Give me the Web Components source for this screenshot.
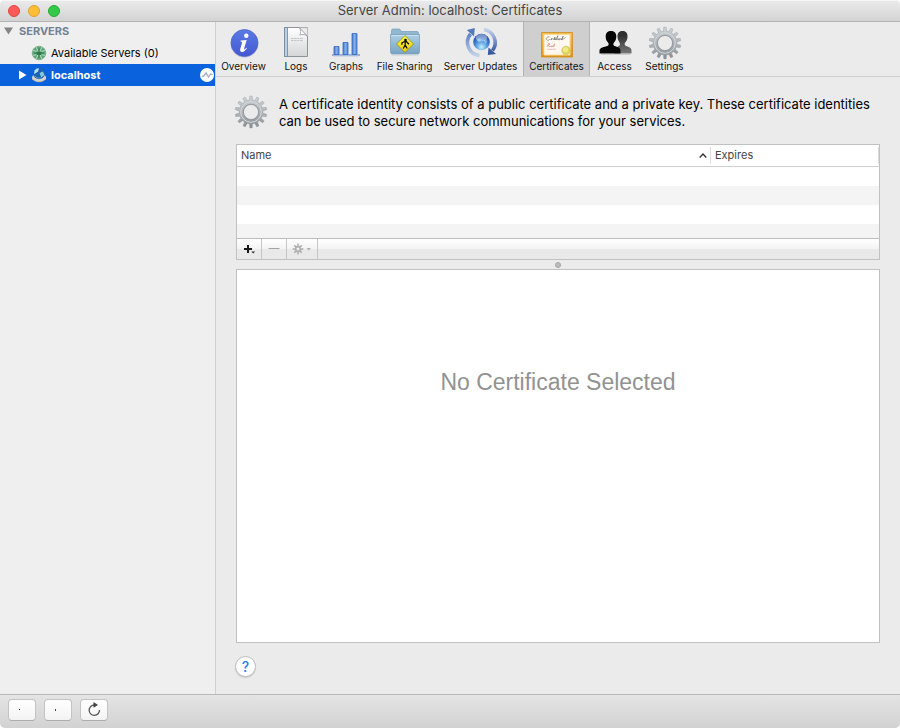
<!DOCTYPE html>
<html lang="en">
<head>
<meta charset="utf-8">
<title>Server Admin: localhost: Certificates</title>
<style>
  html, body { margin: 0; }
  body { background: #fff; font-family: Inter, "Liberation Sans", sans-serif; color: #000; }
</style>
</head>
<body>
<admin-window>
  <title-bar slot="title">Server Admin: localhost: Certificates</title-bar>
  <source-list slot="sidebar"></source-list>
  <tool-bar slot="main">
    <tool-item icon="info" style="--w:55px">Overview</tool-item>
    <tool-item icon="logs" style="--w:50px">Logs</tool-item>
    <tool-item icon="graphs" style="--w:50px">Graphs</tool-item>
    <tool-item icon="sharing" style="--w:67px">File Sharing</tool-item>
    <tool-item icon="updates" style="--w:85px">Server Updates</tool-item>
    <tool-item icon="certificate" style="--w:67px" selected>Certificates</tool-item>
    <tool-item icon="access" style="--w:49px">Access</tool-item>
    <tool-item icon="gear" style="--w:51px">Settings</tool-item>
  </tool-bar>
  <certificate-pane slot="main">
    <span slot="intro">A certificate identity consists of a public certificate and a private key. These certificate identities can be used to secure network communications for your services.</span>
    <certificate-table slot="list"></certificate-table>
    <span slot="detail">No Certificate Selected</span>
  </certificate-pane>
  <bottom-bar slot="footer"></bottom-bar>
</admin-window>

<script>
function gearPath(cx, cy, inner, outer, teeth) {
  const pts = [];
  const step = Math.PI * 2 / teeth;
  const at = (r, a) => pts.push((cx + r * Math.sin(a)).toFixed(2) + ' ' + (cy - r * Math.cos(a)).toFixed(2));
  for (let i = 0; i < teeth; i++) {
    const a = i * step;
    at(inner, a - step * .3);
    at(outer, a - step * .17);
    at(outer, a + step * .17);
    at(inner, a + step * .3);
  }
  return 'M' + pts.join('L') + 'Z';
}

const ICONS = {
  info: `<defs><linearGradient id="a" x2="0" y2="1"><stop stop-color="#5a7be4"/><stop offset="1" stop-color="#4458d2"/></linearGradient></defs>
    <circle cx="16.500" cy="16.500" r="14" fill="#bfc4d8"/><circle cx="16.500" cy="16" r="13.500" fill="url(#a)" stroke="#4a5fc4" stroke-width=".6"/>
    <circle cx="18.300" cy="8.800" r="2.200" fill="#fff"/>
    <path d="M12.700 13.600l6-.7-2.600 8.600c-.4 1.400.5 1.300 2.200-.7l.6.5c-1.700 2.600-3.200 3.700-4.900 3.600-1.800-.1-2.200-1.500-1.700-3.200l1.700-5.700c.3-1.100-.1-1.500-1.500-1.600z" fill="#fff"/>`,
  logs: `<defs><linearGradient id="a" x2="0" y2="1"><stop stop-color="#fff"/><stop offset="1" stop-color="#d3d6d7"/></linearGradient></defs>
    <path d="M4.500.500h23v29h-23z" fill="url(#a)" stroke="#8f9497"/>
    <path d="M4.500.500h3v29h-3z" fill="#b9cfe8" stroke="#71869b" stroke-width=".8"/>
    <path d="M19.500.800l8 8.200V.8z" fill="#ececec" stroke="#b9b9b9" stroke-width=".6"/>
    <path d="M19.500.800c1.500 2.500 1.500 5 .3 7.200 3-1.200 5.700-.7 7.700 1.500z" fill="#fff" stroke="#9c9fa1" stroke-width=".8"/>
    <path d="M11 11.500h12M11 13.500h12" stroke="#b9bcbe" stroke-width=".8" stroke-dasharray="2 .6 3 .6"/>`,
  graphs: `<defs><linearGradient id="a"><stop stop-color="#4478cf"/><stop offset=".5" stop-color="#80aeee"/><stop offset="1" stop-color="#4f84da"/></linearGradient></defs>
    <g transform="translate(-.5 0)"><g fill="url(#a)" stroke="#3968b8" stroke-width=".8"><path d="M4.500 19.500h5v8h-5z"/><path d="M13.500 15.500h5v12h-5z"/><path d="M22.500 6.500h5v21h-5z"/></g>
    <path d="M2.500 28h28" stroke="#3f70c4"/><path d="M4 29.200h25" stroke="#c9d4e8"/></g>`,
  sharing: `<defs><linearGradient id="a" x2="0" y2="1"><stop stop-color="#acd0e4"/><stop offset="1" stop-color="#78a3c2"/></linearGradient><linearGradient id="b" x2="0" y2="1"><stop stop-color="#fff64a"/><stop offset="1" stop-color="#e6ce07"/></linearGradient></defs>
    <g transform="translate(-.5 0)"><path d="M3 6V3.500Q3 2 4.500 2h6q1 0 1.500 1l.5 1.500h16Q30 4.500 30 6v5H3z" fill="#91b8d0" stroke="#759db9" stroke-width=".7"/>
    <path d="M2 7.500h29v17.500q0 2-2 2H4q-2 0-2-2z" fill="url(#a)" stroke="#739bb6" stroke-width=".7"/><path d="M3 8.500h27" stroke="#cae2ef"/><path d="M3 28h27" stroke="#c7d0d6"/>
    <path d="M16.500 8.500l8.500 8.500-8.500 8.500L8 17z" fill="url(#b)" stroke="#958719" stroke-width=".8"/>
    <circle cx="17" cy="13" r="1.300"/><path d="M16 14.500l2 .2 2.500 2.500M16 14.500l-2.500 1.300-.2 2M16.700 14.500v3.500l2 3.500M16.700 18l-2 3.500" fill="none" stroke="#111" stroke-width="1.300"/></g>`,
  updates: `<defs><radialGradient id="a" cx=".5" cy=".8" r=".7"><stop stop-color="#c6f1fd"/><stop offset=".5" stop-color="#4f97e0"/><stop offset="1" stop-color="#1d4aa6"/></radialGradient><linearGradient id="b" x2="0" y2="1"><stop stop-color="#5f82c4"/><stop offset="1" stop-color="#c3d1e8"/></linearGradient><linearGradient id="c" x2="0" y2="1"><stop stop-color="#c3d1e8"/><stop offset="1" stop-color="#3c5da6"/></linearGradient></defs>
    <path d="M14.500 28.500A13.200 13.200 0 0 1 5.500 7" fill="none" stroke="url(#b)" stroke-width="3.600"/><path d="M1.800 3l8-2-.8 8.500z" fill="#5677b8"/>
    <path d="M19 2.500A13.200 13.200 0 0 1 27.500 23.500" fill="none" stroke="url(#c)" stroke-width="3.600"/><path d="M23.500 20.500l-.7 7.500 8.200-1z" fill="#3b599e"/>
    <circle cx="16.500" cy="15" r="8.300" fill="url(#a)"/><ellipse cx="16.500" cy="10.800" rx="5.800" ry="3.800" fill="#fff" opacity=".4"/><path d="M11.500 13l3-2 2 1.500-2.500 3zM18.500 13l4 .5-2 4z" fill="#bde6f7" opacity=".5"/>`,
  certificate: `<defs><linearGradient id="a" x2="0" y2="1"><stop stop-color="#f6bf50"/><stop offset="1" stop-color="#dc9418"/></linearGradient></defs>
    <g transform="translate(-1 0)"><path d="M1.500 5.500h31v24.500h-31z" fill="url(#a)" stroke="#cb8d22" stroke-width=".8"/><path d="M4 7.500h26v20.500h-26z" fill="#fff8ee" stroke="#fbdc96"/>
    <path d="M9.500 10c-2-1-3.700 1-3 2.500s2.500.8 3.500-.5M10.500 12.500l1.500-1.200-.7 1.700 1.700-1.700M13.500 13l1.500-3-1 3 1.500-1.500v1.500l2.500-4.500-1.500 4.500 1.500-1.500v1.500l1.700-1.500-.5 1.500 2-1.500v1.500l2-4-1 4 1.800-1.500 1.700-1" fill="none" stroke="#6c6b6b" stroke-width=".6"/>
    <path d="M7 20l1.500-3.500 1.500.6-2 1.200 2 1.500 1.500-1v1l1.500-1v1l1.500-3-.5 3" fill="none" stroke="#e07878" stroke-width=".6"/><path d="M7 22.300h9" stroke="#ecb3b3" stroke-width=".8"/>
    <circle cx="26" cy="23.500" r="4.300" fill="#dfd458" stroke="#cbbd49" stroke-width=".7" stroke-dasharray="1.500 .5"/><circle cx="25.500" cy="22.700" r="2.600" fill="#eee887"/></g>`,
  access: `<defs><linearGradient id="a" x2="0" y2="1"><stop offset=".2" stop-color="#303030"/><stop offset="1" stop-color="#777"/></linearGradient></defs>
    <path d="M15 26.500h17.500v-3c0-3-3-3.500-5.500-4.500-1.500-.7-1.800-2-.8-3.500 1.500-1.500 2.300-3.300 2.300-6 0-4-2-5.500-5-5.500s-5 1.500-5 5.500c0 3 1 4.500 2 6 1 1.700.5 3-1 3.500z" fill="url(#a)"/>
    <path d="M.5 26.500h21v-3c0-3-3-3.500-6-4.500-1.500-.7-1.500-2-.5-3.500 1.500-1.500 2.300-3.500 2.300-6C17.300 5.500 15 4 12 4S6.700 5.500 6.700 9.500c0 3 .8 4.500 2.300 6 1 1.500 1 2.800-.5 3.500-3 1-8 1.500-8 4.500z" fill="#050505"/><path d="M2 27.500h29" stroke="#bbb" opacity=".6"/>`,
  gear: `<defs><linearGradient id="a" x2="0" y2="1"><stop stop-color="#cdd1d5"/><stop offset=".6" stop-color="#a9afb4"/><stop offset="1" stop-color="#868c91"/></linearGradient></defs>
    <path fill-rule="evenodd" d="${gearPath(16, 16, 12, 16, 14)}M8.500 16a7.500 7.500 0 1 0 15 0a7.500 7.500 0 1 0-15 0z" fill="url(#a)" stroke="#9a9fa3" stroke-width=".4"/>
    <circle cx="16" cy="16" r="10.300" fill="none" stroke="#d3d7da" stroke-width="1"/><circle cx="16" cy="16" r="7.700" fill="none" stroke="#8c9297" stroke-width=".8"/>`
};
const icon = name => `<svg class="icon" width="32" height="32" viewBox="0 0 32 32" overflow="visible" aria-hidden="true">${ICONS[name]}</svg>`;

const define = (name, markup, setup) => customElements.define(name, class extends HTMLElement {
  constructor() {
    super();
    const t = document.createElement('template');
    t.innerHTML = typeof markup === 'function' ? markup(this) : markup;
    this.attachShadow({ mode: 'open' }).append(t.content.cloneNode(true));
    if (setup) setup(this);
  }
});

define('admin-window', `<style>
  :host { display: flex; flex-direction: column; min-height: 100vh; background: #ebebeb; border-radius: 5px; overflow: hidden; }
  .body { flex: 1; display: flex; }
  .side { flex: none; width: 215px; background: #efefef; border-right: 1px solid #cfcfcf; }
  main { flex: 1; min-width: 0; display: flex; flex-direction: column; }
</style>
<slot name="title"></slot>
<div class="body"><nav class="side" aria-label="Servers"><slot name="sidebar"></slot></nav><main><slot name="main"></slot></main></div>
<slot name="footer"></slot>`);

define('title-bar', `<style>
  :host { display: grid; grid-template-columns: 60px 1fr 60px; align-items: center; height: 21px; background: linear-gradient(#ebebeb, #d3d3d3); border-bottom: 1px solid #b3b3b3; box-shadow: inset 0 1px #f6f6f6; }
  .lights { display: flex; gap: 8px; padding-left: 8px; }
  button { box-sizing: border-box; width: 12px; height: 12px; padding: 0; border-radius: 50%; border: 1px solid; }
  .close { background: #fc5b57; border-color: #df4744; }
  .min { background: #fdbe33; border-color: #de9f34; }
  .zoom { background: #34c948; border-color: #27aa35; }
  h1 { margin: 0; font-size: 13px; line-height: 21px; font-weight: 400; color: #454545; text-align: center; white-space: nowrap; }
</style>
<div class="lights"><button class="close" aria-label="Close"></button><button class="min" aria-label="Minimize"></button><button class="zoom" aria-label="Zoom"></button></div>
<h1><slot></slot></h1>`);

define('source-list', `<style>
  :host { display: block; font-size: 11px; }
  ul { list-style: none; margin: 0; padding: 0; }
  button { display: flex; align-items: center; width: 100%; height: 22px; margin: 0; padding: 0; border: 0; background: none; font: inherit; color: inherit; text-align: left; }
  .head { height: 20px; padding: 0 0 2px 4px; gap: 5px; font-weight: 700; color: #718296; }
  .row { padding-left: 18px; gap: 4px; }
  .arrow { width: 9px; height: 10px; }
  .label { flex: 1; }
  .on { background: #0a63dc; color: #fff; font-weight: 700; }
</style>
<button class="head" aria-expanded="true"><svg width="10" height="8"><path d="M0 .500h9L4.500 7.500z" fill="#858585"/></svg>SERVERS</button>
<ul>
 <li><button class="row"><span class="arrow"></span>
  <svg width="16" height="16" viewBox="0 0 16 16"><circle cx="8" cy="8" r="6.800" fill="#5aa775"/><path d="M2 5.500q6 3 12 0M2 10.500q6-3 12 0M5 2q4 6 0 12M11 2q-4 6 0 12" stroke="#c3e3ce" fill="none" stroke-width=".9"/><path d="M5.500 6.500h5v3.500h-5z" fill="#2f8450"/><path d="M3 8h10M8 3v10" stroke="#287748" stroke-width=".8"/><circle cx="8" cy="8" r="6.800" fill="none" stroke="#7fa98c" stroke-width=".8"/></svg>
  <span class="label">Available Servers (0)</span></button></li>
 <li><button class="row on" aria-current="true"><svg class="arrow" viewBox="0 0 9 10"><path d="M1 0.500v9L8.500 5z" fill="#fff"/></svg>
  <svg width="16" height="16" viewBox="0 0 16 16"><path d="M1 10q7 3 14 0v2.500q-7 5.500-14 0z" fill="#b0b0a8"/><ellipse cx="8" cy="10.500" rx="7" ry="3.800" fill="#d6d5cd"/><circle cx="8" cy="6.500" r="5.800" fill="#1b63b2"/><path d="M3.500 3.500q2.500-3 4.500-2L7 4.500 5 6 3 7z" fill="#b4dded"/><path d="M8.500 6l3.500-1.500 1.300 3.500-3 2.500z" fill="#8fc6e2"/><path d="M3.500 9q3.500 3.500 7 2" stroke="#5f9ccd" fill="none"/></svg>
  <span class="label">localhost</span>
  <svg width="15" height="14" viewBox="0 0 15 14"><circle cx="7" cy="7" r="7" fill="#fff"/><path d="M2 8l1.500.5L6 5l2.500 4 2-3 2 .7" fill="none" stroke="#9eabc1" stroke-width="1.300"/></svg></button></li>
</ul>`);

define('tool-bar', `<style>
  :host { display: flex; height: 54px; border-bottom: 1px solid #d0d0d0; }
</style><slot></slot>`);

define('tool-item', el => `<style>
  :host { display: block; flex: none; width: var(--w); }
  :host([selected]) { background: #cfcfcf; box-shadow: inset 1px 0 #b4b4b4, inset -1px 0 #b4b4b4; }
  button { display: flex; flex-direction: column; align-items: center; gap: 1px; width: 100%; height: 100%; margin: 0; padding: 5px 0 0; border: 0; background: none; color: #111; font: 10px/13px Inter, sans-serif; white-space: nowrap; }
  .icon { flex: none; }
</style><button>${icon(el.getAttribute('icon'))}<slot></slot></button>`);

define('certificate-table', `<style>
  :host { display: block; border: 1px solid #c1c1c1; background: #fff; }
  .clip { height: 93px; overflow: hidden; }
  table { width: 100%; border-collapse: separate; border-spacing: 0; table-layout: fixed; }
  th { height: 21px; padding: 0 3px 0 4px; border-bottom: 1px solid #cfcfcf; font-size: 11px; line-height: 21px; font-weight: 400; text-align: left; color: #444; }
  th > div { display: flex; align-items: center; justify-content: space-between; }
  .expires { width: 161px; padding-left: 5px; background: linear-gradient(#dcdcdc, #dcdcdc) 0 2px / 1px 17px no-repeat, linear-gradient(#dcdcdc, #dcdcdc) 100% 2px / 1px 17px no-repeat; }
  td { height: 19px; padding: 0; }
  tbody tr:nth-child(even) { background: #f4f4f4; }
  .actions { display: flex; height: 20px; border-top: 1px solid #bdbdbd; background: linear-gradient(#fff, #f4f4f4 50%, #e9e9e9 50%); }
  button { box-sizing: border-box; width: 25px; height: 20px; margin: 0; padding: 0; border: 0; border-right: 1px solid #c6c6c6; background: none; display: grid; place-items: center; }
  .wide { width: 31px; }
</style>
<div class="clip"><table>
 <thead><tr><th aria-sort="ascending"><div>Name<svg width="8" height="6"><path d="M.7 4.500L4 1 7.300 4.500" fill="none" stroke="#333" stroke-width="1.300"/></svg></div></th><th class="expires">Expires</th></tr></thead>
 <tbody><tr><td></td><td></td></tr><tr><td></td><td></td></tr><tr><td></td><td></td></tr><tr><td></td><td></td></tr></tbody>
</table></div>
<div class="actions">
 <button aria-label="Add"><svg width="12" height="10"><path d="M1 5h8M5 1v8" stroke="#181818" stroke-width="2"/><path d="M8.500 7.500h3.500L10.200 9.500z" fill="#222"/></svg></button>
 <button aria-label="Remove" disabled><svg width="12" height="10"><path d="M.5 4.500h11" stroke="#a4a4a4"/></svg></button>
 <button class="wide" aria-label="Certificate actions" disabled><svg width="20" height="12"><path fill-rule="evenodd" d="${gearPath(6, 6, 3.400, 5.500, 8)}M4.500 6a1.500 1.500 0 1 0 3 0a1.500 1.500 0 1 0-3 0z" fill="#b0b0b0"/><path d="M14.500 5h4.500l-2.200 2.500z" fill="#b0b0b0"/></svg></button>
</div>`);

define('certificate-pane', `<style>
  :host { flex: 1; display: flex; flex-direction: column; padding: 19px 20px 17px; }
  .intro { display: flex; gap: 12px; margin-left: -1px; padding-bottom: 14px; font-size: 13px; line-height: 17px; }
  .intro p { margin: 0; min-height: 34px; }
  .icon { flex: none; }
  .split { display: grid; place-items: center; height: 9px; }
  .grip { box-sizing: border-box; width: 6px; height: 6px; border-radius: 50%; background: #bcbcbc; border: 1px solid #a6a6a6; }
  .detail { flex: 1; border: 1px solid #c1c1c1; background: #fff; text-align: center; }
  .detail p { margin: 98px 0 0; font: 23px/28px "Liberation Sans", Arial, sans-serif; color: #929292; }
  .help { box-sizing: border-box; width: 21px; height: 21px; margin: 13px 0 0 -1px; padding: 0; border: 1px solid #bdbdbd; border-radius: 50%; background: #fff; box-shadow: 0 1px 1px #0002; color: #1b83f5; font: 500 14px/19px Inter, sans-serif; }
</style>
<div class="intro">${icon('gear')}<p><slot name="intro"></slot></p></div>
<slot name="list"></slot>
<div class="split"><span class="grip"></span></div>
<section class="detail"><p><slot name="detail"></slot></p></section>
<button class="help" aria-label="Help">?</button>`);

define('bottom-bar', `<style>
  :host { display: flex; gap: 8px; padding: 4px 8px 7px; border-top: 1px solid #b9b9b9; background: linear-gradient(#e4e4e4, #d2d2d2); }
  button { box-sizing: border-box; width: 28px; height: 22px; margin: 0; padding: 0; display: grid; place-items: center; border: 1px solid #c3c3c3; border-bottom-color: #adadad; border-radius: 4px; background: linear-gradient(#fff, #f3f3f3); }
</style>
<button aria-label="Add"><svg width="10" height="10"><path d="M2 4.500h1" stroke="#222"/></svg></button>
<button aria-label="Actions"><svg width="10" height="10"><path d="M2.500 4v2" stroke="#444"/></svg></button>
<button aria-label="Refresh"><svg width="14" height="16" viewBox="0 0 14 16"><path d="M7.500 3A5.200 5.200 0 1 0 12.500 8" fill="none" stroke="#555" stroke-width="1.300"/><path d="M6.500 0l4.500 3-4.500 2.800z" fill="#444"/></svg></button>`);
</script>
</body>
</html>
